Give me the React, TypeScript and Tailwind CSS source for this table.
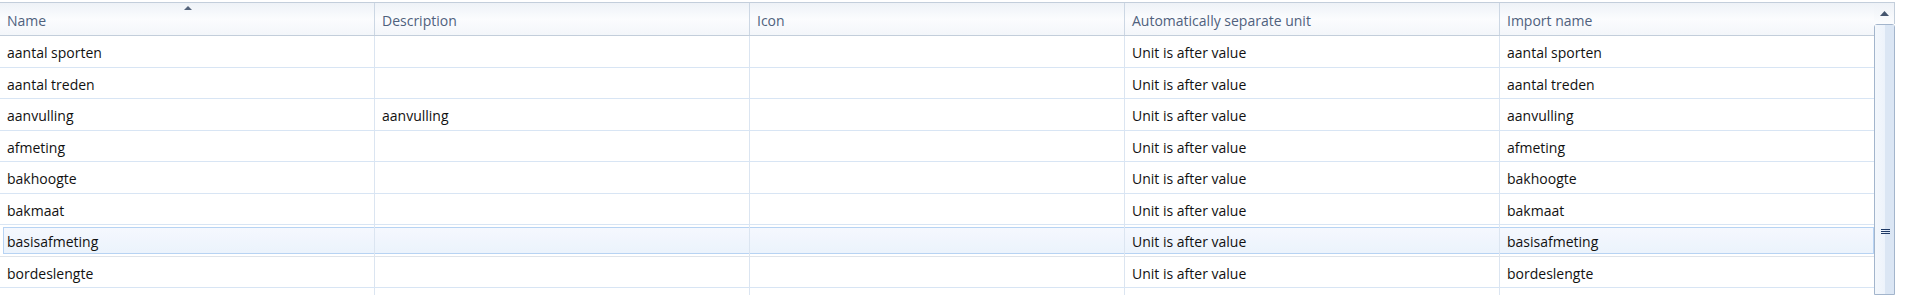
import React from "react";

const rows: [string, string, string, string, string][] = [
  ["aantal sporten", "", "", "Unit is after value", "aantal sporten"],
  ["aantal treden", "", "", "Unit is after value", "aantal treden"],
  ["aanvulling", "aanvulling", "", "Unit is after value", "aanvulling"],
  ["afmeting", "", "", "Unit is after value", "afmeting"],
  ["bakhoogte", "", "", "Unit is after value", "bakhoogte"],
  ["bakmaat", "", "", "Unit is after value", "bakmaat"],
  ["basisafmeting", "", "", "Unit is after value", "basisafmeting"],
  ["bordeslengte", "", "", "Unit is after value", "bordeslengte"],
  ["", "", "", "", ""],
];

const headers = ["Name", "Description", "Icon", "Automatically separate unit", "Import name"];
const widths = ["w-[375px]", "w-[375px]", "w-[375px]", "w-[375px]", "w-[374px]"];

export default function App() {
  return (
    <div
      className="w-[1907px] h-[295px] overflow-hidden bg-white flex pt-[2px]"
      style={{ fontFamily: '"Open Sans", "Noto Sans", "Liberation Sans", sans-serif' }}
    >
      <div className="w-[1874px] flex flex-col shrink-0">
        {/* header */}
        <div className="h-[34px] flex border-t border-b border-[#c3cedb] bg-gradient-to-b from-[#eef2f7] via-[#fbfcfe] to-[#f3f6fa] shrink-0">
          {headers.map((h, i) => (
            <div
              key={h}
              className={`${widths[i]} relative flex items-center pl-[7px] pt-[2px] text-[14px] text-[#4f617d] ${i < 4 ? "border-r border-[#ccd7e4]" : ""}`}
            >
              {h}
              {i === 0 && (
                <svg className="absolute left-[184px] top-[3px]" width="8" height="4" viewBox="0 0 8 4">
                  <polygon points="4,0 8,4 0,4" fill="#54637a" />
                </svg>
              )}
            </div>
          ))}
        </div>
        {/* rows */}
        {rows.map((r, ri) => (
          <div
            key={ri}
            className={`relative flex h-[31.5px] shrink-0 border-b ${ri === 6 ? "border-[#dfe4ea]" : "border-[#d8e5f4]"}`}
          >
            {ri === 6 && (
              <div className="absolute left-[3px] right-0 top-[2px] bottom-[2px] border border-[#b0cff2] bg-gradient-to-b from-[#f4f8fe] to-[#eaf2fc] opacity-90" />
            )}
            {r.map((c, ci) => (
              <div
                key={ci}
                className={`${widths[ci]} relative flex items-center pl-[7px] pt-[3px] text-[14px] text-[#111111] ${ci < 4 ? "border-r border-[#dbe5f1]" : ""}`}
              >
                {c}
              </div>
            ))}
          </div>
        ))}
      </div>
      {/* scrollbar */}
      <div className="w-[21px] flex flex-col shrink-0">
        <div className="h-[22px] border-t border-r border-[#c3cedb] flex items-center justify-center bg-gradient-to-b from-[#eef2f7] to-[#fbfcfe] shrink-0">
          <svg width="9" height="5" viewBox="0 0 9 5">
            <polygon points="4.5,0 9,5 0,5" fill="#44556e" />
          </svg>
        </div>
        <div className="flex-1 rounded-t-[3px] border border-[#a3b5cc] flex">
          <div className="flex-1 bg-gradient-to-r from-[#f3f7fc] to-[#edf3fb]" />
          <div className="flex-1 bg-[#dbe6f4]" />
        </div>
      </div>
      <div className="flex-1 bg-white" />
      {/* grip */}
      <div className="absolute left-[1881px] top-[229px] w-[9px] flex flex-col gap-[1px]">
        <div className="h-[1px] bg-[#1f3a66]" />
        <div className="h-[1px] bg-[#1f3a66]" />
        <div className="h-[1px] bg-[#1f3a66]" />
      </div>
    </div>
  );
}
